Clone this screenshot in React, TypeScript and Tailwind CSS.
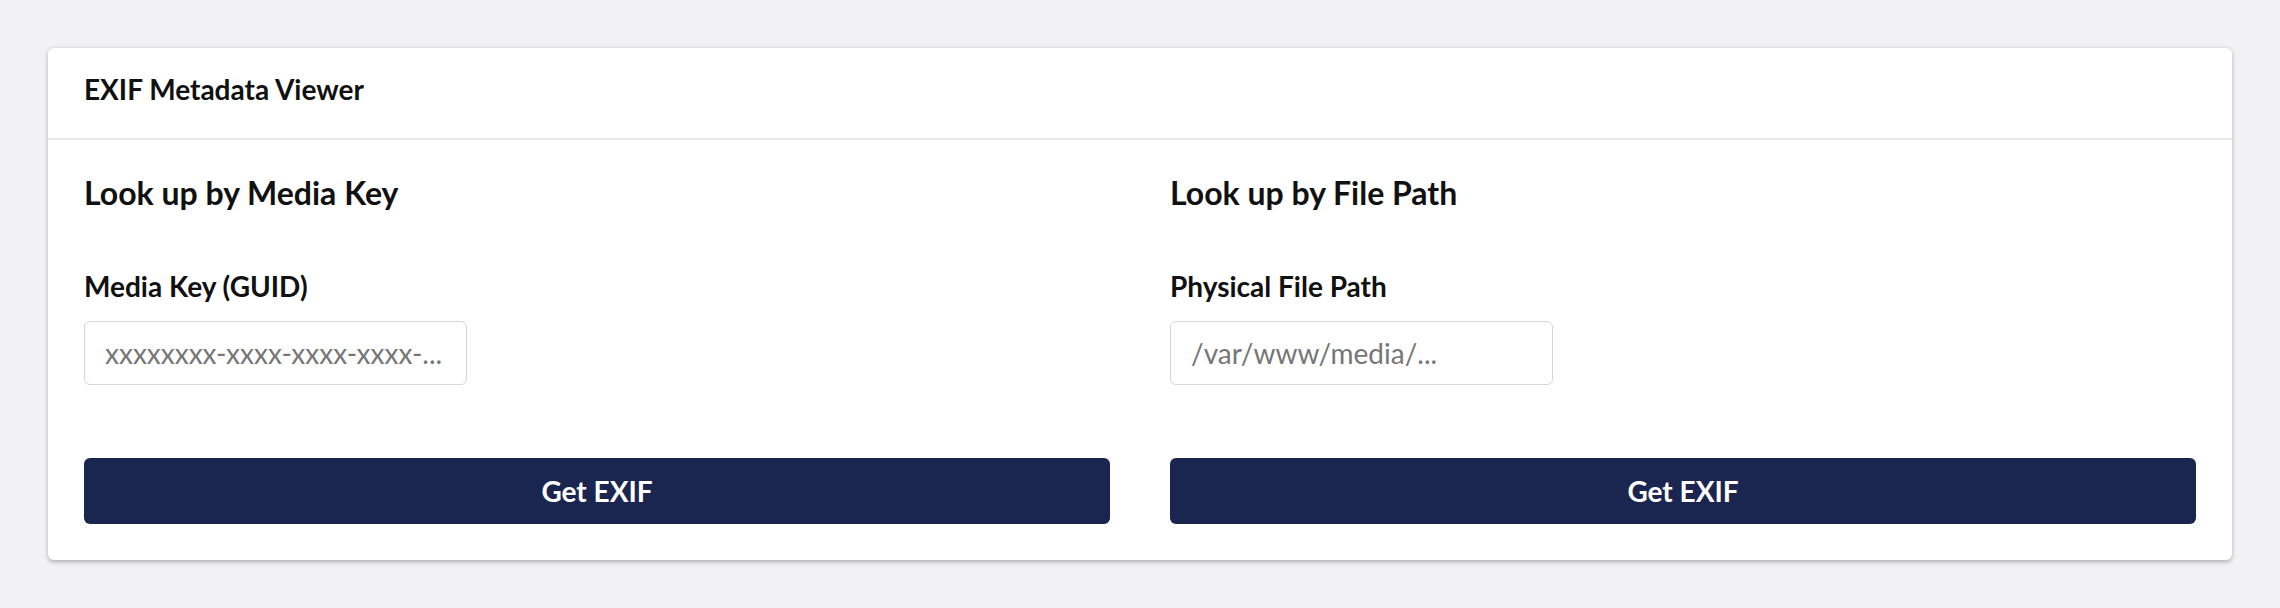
import React from 'react';

function LookupColumn({ title, label, placeholder }: { title: string; label: string; placeholder: string }) {
  return (
    <div className="flex flex-col">
      <h2 className="text-[32px] leading-[40px] font-bold text-[#111]">{title}</h2>
      <label className="mt-[55px] text-[28px] leading-[36px] font-bold text-[#111]">{label}</label>
      <input
        type="text"
        placeholder={placeholder}
        className="mt-[17px] h-[64px] w-[383px] rounded-[6px] border-[1.5px] border-[#d6d6d6] bg-white px-[20px] text-[28px] text-[#222] outline-none placeholder:text-[#767676]"
      />
      <button className="mt-[73px] h-[66px] w-full rounded-[6px] bg-[#1b2650] text-[28px] font-bold text-white">
        Get EXIF
      </button>
    </div>
  );
}

export default function App() {
  return (
    <div className="min-h-[608px] bg-[#f2f2f4] p-12 font-['Lato','Noto_Sans',sans-serif]">
      <div className="rounded-[6px] bg-white shadow-[0_1.5px_4px_rgba(0,0,0,0.28)]">
        <div className="h-[92px] border-b-2 border-[#e8e8ea] px-9 pt-[24px]">
          <h1 className="text-[28px] leading-[34px] font-bold text-[#111]">EXIF Metadata Viewer</h1>
        </div>
        <div className="grid grid-cols-2 gap-[60px] px-9 pt-[33px] pb-[36px]">
          <LookupColumn title="Look up by Media Key" label="Media Key (GUID)" placeholder="xxxxxxxx-xxxx-xxxx-xxxx-..." />
          <LookupColumn title="Look up by File Path" label="Physical File Path" placeholder="/var/www/media/..." />
        </div>
      </div>
    </div>
  );
}
